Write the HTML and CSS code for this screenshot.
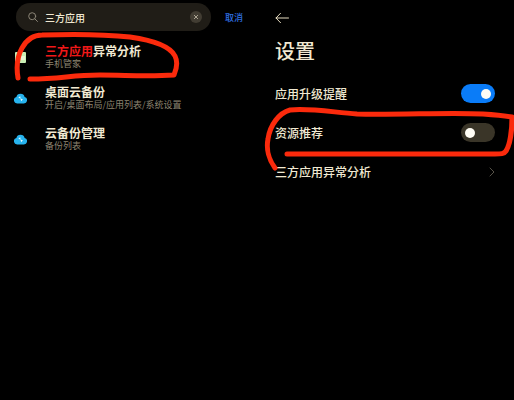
FILE: index.html
```html
<!DOCTYPE html>
<html lang="zh-CN">
<head>
    <meta charset="UTF-8">
    <meta name="viewport" content="width=device-width, initial-scale=1.0">
    <title>设置</title>
    <link rel="stylesheet" href="styles.css">
</head>
<body>

    <main class="screens">
        <!-- 搜索 -->
        <section class="screen search-screen">
            <form class="search-bar">
                <div class="search-box">
                    <svg class="search-icon" viewBox="0 0 10 10" aria-hidden="true">
                        <circle cx="4.2" cy="4.2" r="3.5"/>
                        <path d="M6.8 6.8 9.5 9.5"/>
                    </svg>
                    <input type="text" class="search-input" value="三方应用" aria-label="搜索">
                    <button type="reset" class="clear-button" aria-label="清除">
                        <svg viewBox="0 0 12 12">
                            <path d="M4.3 4.3 7.7 7.7M7.7 4.3 4.3 7.7"/>
                        </svg>
                    </button>
                </div>
                <button type="button" class="cancel-button">取消</button>
            </form>

            <ul class="results">
                <li>
                    <a href="#" class="result">
                        <svg class="result-icon" viewBox="0 0 13 12" aria-hidden="true">
                            <rect x="1" y="1" width="11" height="11" rx="1" fill="#c9efb5"/>
                            <path d="M6 5h5v4H7z" fill="#e9f5d4"/>
                        </svg>
                        <span class="result-text">
                            <span class="result-title"><mark>三方应用</mark>异常分析</span>
                            <span class="result-path">手机管家</span>
                        </span>
                    </a>
                </li>
                <li>
                    <a href="#" class="result">
                        <svg class="result-icon" viewBox="0 0 13 12" aria-hidden="true">
                            <path d="M3.3 11.5A3.3 3.3 0 0 1 2.4 5 4.2 4.2 0 0 1 10.6 5 3.3 3.3 0 0 1 9.7 11.5z" fill="#27b3ee"/>
                            <path d="M4.3 5.6 6.3 4.2 6.6 6.7zM6.4 6.6 8.9 7.2 7.2 9.3z" fill="#e4f8ff"/>
                        </svg>
                        <span class="result-text">
                            <span class="result-title">桌面云备份</span>
                            <span class="result-path">开启/桌面布局/应用列表/系统设置</span>
                        </span>
                    </a>
                </li>
                <li>
                    <a href="#" class="result">
                        <svg class="result-icon" viewBox="0 0 13 12" aria-hidden="true">
                            <path d="M3.3 11.5A3.3 3.3 0 0 1 2.4 5 4.2 4.2 0 0 1 10.6 5 3.3 3.3 0 0 1 9.7 11.5z" fill="#27b3ee"/>
                            <path d="M4.3 5.6 6.3 4.2 6.6 6.7zM6.4 6.6 8.9 7.2 7.2 9.3z" fill="#e4f8ff"/>
                        </svg>
                        <span class="result-text">
                            <span class="result-title">云备份管理</span>
                            <span class="result-path">备份列表</span>
                        </span>
                    </a>
                </li>
            </ul>

            <svg class="marker" viewBox="0 0 257 200" aria-hidden="true">
                <path d="M18 78C16 66 17 57 22 48C27 39 33 35 42 35C72 34 102 34 130 37C151 40 170 46 175 56C178 62 177 68 174 75C146 77 126 75 100 75C70 75 62 79 30 79"/>
            </svg>
        </section>

        <!-- 设置 -->
        <section class="screen settings-screen">
            <button type="button" class="back-button" aria-label="返回">
                <svg viewBox="0 0 14 12">
                    <path d="M13.5 6H1M5.5 1.3 1 6 5.5 10.7"/>
                </svg>
            </button>
            <h1>设置</h1>

            <div class="settings">
                <label class="setting">
                    应用升级提醒
                    <input type="checkbox" class="switch" checked>
                </label>
                <label class="setting">
                    资源推荐
                    <input type="checkbox" class="switch">
                </label>
                <a href="#" class="setting">
                    三方应用异常分析
                    <svg class="chevron" viewBox="0 0 6 10" aria-hidden="true">
                        <path d="M1 1 5 5 1 9"/>
                    </svg>
                </a>
            </div>

            <svg class="marker" viewBox="0 0 257 200" aria-hidden="true">
                <path d="M18 168C12 160 9 149 11 139C13 125 22 113 33 110C52 108 74 112 100 114C145 115 195 112 226 114C240 115 249 116 255 117C255 130 253 145 249 151C247 154 244 154 238 154H30"/>
            </svg>
        </section>
    </main>

</body>
</html>
```
FILE: styles.css
```css
* {
    box-sizing: border-box;
}
body {
    margin: 0;
    background-color: #000;
    color: #f1e9d2;
    font-family: "Noto Sans CJK SC", sans-serif;
    font-size: 12px;
    font-weight: 500;
}
button {
    padding: 0;
    border: none;
    background: none;
    color: inherit;
    font: inherit;
    cursor: pointer;
}
a {
    color: inherit;
    text-decoration: none;
}
svg {
    display: block;
    fill: none;
    stroke-linecap: round;
    stroke-linejoin: round;
}
.screens {
    display: grid;
    grid-template-columns: 1fr 1fr;
    min-height: 100vh;
}
.screen {
    position: relative;
    min-width: 0;
}

/* 搜索 */
.search-bar {
    display: flex;
    align-items: center;
    gap: 14px;
    padding: 3px 14px 0 16px;
}
.search-box {
    display: flex;
    align-items: center;
    flex: 1;
    min-width: 0;
    height: 28px;
    padding: 0 9px 0 12px;
    border-radius: 14px;
    background-color: #201d17;
}
.search-icon {
    width: 10px;
    height: 10px;
    margin-right: 7px;
    stroke: #8b8577;
}
.search-input {
    flex: 1;
    min-width: 0;
    padding: 0;
    border: none;
    outline: none;
    background: none;
    color: #f1e9d2;
    font: inherit;
    font-size: 10px;
}
.clear-button {
    width: 12px;
    height: 12px;
    border-radius: 50%;
    background-color: #423d33;
}
.clear-button path {
    stroke: #aca594;
}
.cancel-button {
    color: #2f6fe0;
    font-size: 9px;
}
.results {
    margin: 5px 0 0;
    padding: 0 14px;
    list-style: none;
}
.result {
    display: flex;
    align-items: center;
    gap: 18px;
    height: 41px;
}
.result-icon {
    flex: none;
    width: 13px;
    height: 12px;
}
.result-title,
.result-path {
    display: block;
    white-space: nowrap;
}
.result-title {
    font-weight: 600;
    line-height: 14px;
}
.result-title mark {
    background: none;
    color: #f01818;
}
.result-path {
    color: #8c8470;
    font-size: 9px;
    font-weight: 400;
    line-height: 12px;
}

/* 设置 */
.settings-screen {
    padding: 12px 19px 0 18px;
}
.back-button {
    display: block;
    width: 14px;
    height: 12px;
}
.back-button path {
    stroke: #e6dcc0;
}
h1 {
    margin: 13px 0 9px;
    font-size: 20px;
    font-weight: 500;
    line-height: 28px;
}
.setting {
    display: flex;
    align-items: center;
    justify-content: space-between;
    height: 39px;
}
.switch {
    appearance: none;
    display: flex;
    align-items: center;
    width: 34px;
    height: 19px;
    margin: 0;
    padding: 0 4px;
    border-radius: 10px;
    background-color: #3a3528;
    cursor: pointer;
}
.switch::before {
    content: "";
    width: 10px;
    height: 10px;
    border-radius: 50%;
    background-color: #fffdf5;
}
.switch:checked {
    justify-content: flex-end;
    background-color: #0a7cf8;
}
.chevron {
    width: 6px;
    height: 10px;
    stroke: #575349;
}

/* 手绘红圈 */
.marker {
    position: absolute;
    top: 0;
    left: 0;
    width: 100%;
    pointer-events: none;
    stroke: #fb2a0c;
    stroke-width: 5;
}
```
